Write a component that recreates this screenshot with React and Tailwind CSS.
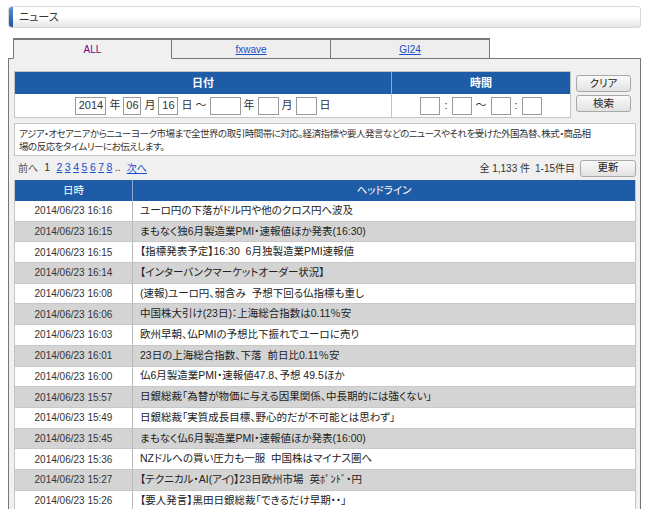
import React from 'react';

const rows = [
  ['2014/06/23 16:16', 'ユーロ円の下落がドル円や他のクロス円へ波及'],
  ['2014/06/23 16:15', 'まもなく独6月製造業PMI・速報値ほか発表(16:30)'],
  ['2014/06/23 16:15', '【指標発表予定】16:30  6月独製造業PMI速報値'],
  ['2014/06/23 16:14', '【インターバンクマーケットオーダー状況】'],
  ['2014/06/23 16:08', '(速報)ユーロ円、弱含み  予想下回る仏指標も重し'],
  ['2014/06/23 16:06', '中国株大引け(23日)：上海総合指数は0.11％安'],
  ['2014/06/23 16:03', '欧州早朝、仏PMIの予想比下振れでユーロに売り'],
  ['2014/06/23 16:01', '23日の上海総合指数、下落  前日比0.11％安'],
  ['2014/06/23 16:00', '仏6月製造業PMI・速報値47.8、予想 49.5ほか'],
  ['2014/06/23 15:57', '日銀総裁「為替が物価に与える因果関係、中長期的には強くない」'],
  ['2014/06/23 15:49', '日銀総裁「実質成長目標、野心的だが不可能とは思わず」'],
  ['2014/06/23 15:45', 'まもなく仏6月製造業PMI・速報値ほか発表(16:00)'],
  ['2014/06/23 15:36', 'NZドルへの買い圧力も一服  中国株はマイナス圏へ'],
  ['2014/06/23 15:27', '【テクニカル・AI(アイ)】23日欧州市場  英ﾎﾟﾝﾄﾞ・円'],
  ['2014/06/23 15:26', '【要人発言】黒田日銀総裁「できるだけ早期・・」'],
];

const font = { fontFamily: '"Liberation Sans", "Noto Sans CJK JP", sans-serif', fontFeatureSettings: '"palt"' };

// small text box used in the search form
const Box = ({ w, value }) => (
  <span
    className={`inline-flex items-center justify-center h-[18px] ${w} bg-white border border-[#9a9a9a] text-[11px] text-[#333]`}
  >
    {value}
  </span>
);

const Btn = ({ children, className = '' }) => (
  <button
    className={`flex items-center justify-center rounded-[3px] border border-[#a8a8a8] bg-gradient-to-b from-[#fafafa] to-[#e2e2e2] text-[10.5px] text-[#222] ${className}`}
  >
    {children}
  </button>
);

export default function App() {
  return (
    <div className="w-[650px] h-[509px] overflow-hidden bg-white text-[#333]" style={font}>
      {/* title bar */}
      <div className="pt-[6px] pl-[8px] pr-[9px]">
        <div className="flex h-[22px] items-center rounded-[3px] border border-[#d8d8d8] bg-gradient-to-b from-white via-white to-[#e4e4e4]">
          <div className="h-full w-[4px] rounded-l-[3px] bg-gradient-to-b from-[#5a8fd0] to-[#1f55a0]" />
          <span className="pl-[6px] text-[11px] text-[#333]">ニュース</span>
        </div>
      </div>

      {/* tabs */}
      <div className="mt-[10px] pl-[13px] flex relative z-10 -mb-px">
        <div className="flex h-[21px] w-[159px] items-center justify-center border-x border-t-2 border-[#777] border-b border-b-[#f0f0f0] bg-[#f0f0f0] text-[10px] text-[#800080]">
          ALL
        </div>
        <div className="flex h-[21px] w-[159px] items-center justify-center border-r border-t-2 border-b border-[#777] bg-[#eeeeee] text-[10px] text-[#1a4fc8] underline">
          fxwave
        </div>
        <div className="flex h-[21px] w-[159px] items-center justify-center border-r border-t-2 border-b border-[#777] bg-[#eeeeee] text-[10px] text-[#1a4fc8] underline">
          GI24
        </div>
      </div>

      {/* panel */}
      <div className="ml-[8px] mr-[9px] border border-[#777] bg-[#f0f0f0] pl-[5px] pr-[4px] pt-[12px]">
        {/* search */}
        <div className="flex gap-[5px]">
          <div className="w-[557px] border border-[#c4c4c4]">
            <div className="flex h-[22px] bg-[#1f5ca8] text-[11px] font-bold text-white">
              <div className="flex w-[377px] items-center justify-center border-r border-[#8aa8d0]">日付</div>
              <div className="flex flex-1 items-center justify-center">時間</div>
            </div>
            <div className="flex h-[23px] bg-white text-[11px]">
              <div className="flex w-[377px] items-center justify-center gap-[3px] border-r border-[#c4c4c4]">
                <Box w="w-[31px]" value="2014" />
                <span>年</span>
                <Box w="w-[18px]" value="06" />
                <span>月</span>
                <Box w="w-[20px]" value="16" />
                <span>日 ～</span>
                <Box w="w-[31px]" />
                <span>年</span>
                <Box w="w-[21px]" />
                <span>月</span>
                <Box w="w-[21px]" />
                <span>日</span>
              </div>
              <div className="flex flex-1 items-center justify-center gap-[4px]">
                <Box w="w-[20px]" />
                <span>:</span>
                <Box w="w-[20px]" />
                <span>～</span>
                <Box w="w-[20px]" />
                <span>:</span>
                <Box w="w-[20px]" />
              </div>
            </div>
          </div>
          <div className="flex flex-col gap-[3px] pt-[4px]">
            <Btn className="h-[17px] w-[55px]">クリア</Btn>
            <Btn className="h-[17px] w-[55px]">検索</Btn>
          </div>
        </div>

        {/* description */}
        <div className="mt-[5px] h-[33px] border border-[#c4c4c4] bg-white px-[4px] pt-[3px] text-[9.5px] leading-[13px] tracking-[-0.5px] whitespace-nowrap text-[#333]">
          アジア・オセアニアからニューヨーク市場まで全世界の取引時間帯に対応。経済指標や要人発言などのニュースやそれを受けた外国為替、株式・商品相
          <br />
          場の反応をタイムリーにお伝えします。
        </div>

        {/* pager */}
        <div className="flex h-[24px] items-center justify-between pl-[4px] text-[10px]">
          <div className="flex items-center gap-[6px]">
            <span className="text-[#555]">前へ</span>
            <span className="flex gap-[2.5px] text-[10.5px]">
              <span className="mr-[4px]">1</span>
              {['2', '3', '4', '5', '6', '7', '8'].map((n) => (
                <span key={n} className="text-[#1a4fc8] underline">{n}</span>
              ))}
              <span>..</span>
            </span>
            <span className="text-[#1a4fc8] underline">次へ</span>
          </div>
          <div className="flex items-center gap-[5px]">
            <span>全 1,133 件</span>
            <span>1-15件目</span>
            <Btn className="h-[17px] w-[56px]">更新</Btn>
          </div>
        </div>

        {/* list */}
        <div className="border-x border-[#c4c4c4]">
          <div className="flex h-[21px] bg-[#1f5ca8] text-[10.5px] text-white">
            <div className="flex w-[118px] items-center justify-center border-r border-[#8aa8d0]">日時</div>
            <div className="flex flex-1 items-center justify-center">ヘッドライン</div>
          </div>
          {rows.map(([d, h], i) => (
            <div
              key={i}
              className={`flex h-[20.7px] border-b border-[#c8c8c8] ${i % 2 ? 'bg-[#d4d4d4]' : 'bg-white'}`}
            >
              <div className="flex w-[118px] items-center justify-center border-r border-[#b8b8b8] text-[10px] text-[#333]">
                {d}
              </div>
              <div className="flex flex-1 items-center whitespace-pre pl-[7px] text-[10.5px] text-[#222]">{h}</div>
            </div>
          ))}
        </div>
      </div>
    </div>
  );
}
